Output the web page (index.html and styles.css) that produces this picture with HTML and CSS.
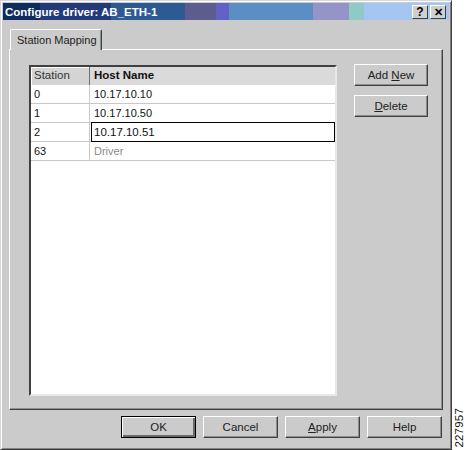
FILE: index.html
```html
<!DOCTYPE html>
<html lang="en">
<head>
    <meta charset="UTF-8">
    <title>Configure driver: AB_ETH-1</title>
    <link rel="stylesheet" href="styles.css">
</head>
<body>
    <div class="window">
        <div class="title-bar">
            <span class="title-text">Configure driver: AB_ETH-1</span>
            <div class="title-buttons">
                <span class="title-btn">?</span>
                <span class="title-btn close">✕</span>
            </div>
        </div>

        <div class="content">
            <div class="tabs">
                <div class="tab">Station Mapping</div>
            </div>
            <div class="panel">
                <div class="grid">
                    <div class="grid-row header">
                        <div class="cell station">Station</div>
                        <div class="cell host">Host Name</div>
                    </div>
                    <div class="grid-row">
                        <div class="cell station">0</div>
                        <div class="cell host">10.17.10.10</div>
                    </div>
                    <div class="grid-row">
                        <div class="cell station">1</div>
                        <div class="cell host">10.17.10.50</div>
                    </div>
                    <div class="grid-row">
                        <div class="cell station">2</div>
                        <div class="cell host editing">10.17.10.51</div>
                    </div>
                    <div class="grid-row">
                        <div class="cell station">63</div>
                        <div class="cell host muted">Driver</div>
                    </div>
                </div>
                <div class="side-buttons">
                    <button class="btn">Add <u>N</u>ew</button>
                    <button class="btn"><u>D</u>elete</button>
                </div>
            </div>
            <div class="footer">
                <button class="btn default">OK</button>
                <button class="btn">Cancel</button>
                <button class="btn"><u>A</u>pply</button>
                <button class="btn">Help</button>
            </div>
        </div>
    </div>
    <div class="strip">
        <span class="figure-id">227957</span>
    </div>
</body>
</html>
```

FILE: styles.css
```css
body {
    margin: 0;
    display: flex;
    width: 466px;
    height: 450px;
    overflow: hidden;
    background: #fff;
    font-family: "Liberation Sans", Arial, sans-serif;
    font-size: 11px;
    color: #111;
}

.window {
    width: 452px;
    height: 450px;
    box-sizing: border-box;
    padding: 2px;
    border: 1px solid;
    border-color: #d8d8d8 #404040 #404040 #d8d8d8;
    box-shadow: inset 1px 1px 0 #fff, inset -1px -1px 0 #808080;
    background: #cbcbcb;
    display: flex;
    flex-direction: column;
}

.title-bar {
    height: 17px;
    display: flex;
    align-items: center;
    justify-content: space-between;
    padding: 0 2px;
    background: linear-gradient(to right,
        #0f2c5e 0, #0f2c5e 37px,
        #23397a 37px, #23397a 108px,
        #2e5a93 108px, #2e5a93 182px,
        #5c5c8e 182px, #5c5c8e 213px,
        #6262c6 213px, #6262c6 226px,
        #5b8fc3 226px, #5b8fc3 310px,
        #9494c8 310px, #9494c8 346px,
        #90cac6 346px, #90cac6 361px,
        #a5c6f0 361px);
}

.title-text {
    color: #fff;
    font-weight: bold;
    font-size: 11.5px;
}

.title-buttons {
    display: flex;
    gap: 2px;
    margin-right: 1px;
}

.title-btn {
    width: 16px;
    height: 14px;
    box-sizing: border-box;
    background: #cfcfcf;
    border: 1px solid;
    border-color: #fff #404040 #404040 #fff;
    font-weight: bold;
    font-size: 12px;
    line-height: 12px;
    text-align: center;
    color: #000;
}

.title-btn.close {
    font-size: 11px;
}

.content {
    flex: 1;
    display: flex;
    flex-direction: column;
    padding: 9px 6px 0 6px;
}

.tabs {
    display: flex;
    padding-left: 1px;
    height: 20px;
    position: relative;
    z-index: 1;
}

.tab {
    width: 92px;
    height: 21px;
    box-sizing: border-box;
    padding: 4px 0 0 6px;
    white-space: nowrap;
    background: #cbcbcb;
    border: 1px solid;
    border-bottom: none;
    border-color: #fff #404040 #cbcbcb #fff;
    border-radius: 2px 2px 0 0;
    box-shadow: inset -1px 0 0 #909090;
    font-size: 11px;
    color: #222;
}

.panel {
    width: 434px;
    height: 361px;
    box-sizing: border-box;
    border: 1px solid;
    border-color: #fff #404040 #404040 #fff;
    box-shadow: inset -1px -1px 0 #909090;
    display: flex;
    gap: 17px;
    padding: 15px 0 0 19px;
}

.grid {
    width: 308px;
    height: 331px;
    box-sizing: border-box;
    background: #fff;
    border: 2px solid;
    border-color: #404040 #e8e8e8 #e8e8e8 #404040;
    display: flex;
    flex-direction: column;
}

.grid-row {
    display: flex;
    height: 19px;
    border-bottom: 1px solid #c8c8c8;
    box-sizing: border-box;
}

.grid-row.header {
    height: 18px;
    border-bottom: none;
    background: #d4d4d4;
}

.cell {
    box-sizing: border-box;
    padding: 3px 0 0 3px;
    white-space: nowrap;
}

.cell.station {
    width: 59px;
    border-right: 1px solid #c8c8c8;
}

.cell.host {
    flex: 1;
    padding-left: 4px;
}

.header .cell {
    padding-top: 2px;
    font-size: 11.5px;
}

.header .cell.station {
    color: #333;
    border-right: 1px solid #707070;
    box-shadow: inset 1px 1px 0 #fff;
}

.header .cell.host {
    font-weight: bold;
    background: #dadada;
}

.cell.editing {
    border: 1px solid #000;
    margin: -1px 0 -1px 1px;
    padding: 3px 0 0 2px;
    font-size: 11.5px;
}

.cell.muted {
    color: #8a8a8a;
}

.side-buttons {
    display: flex;
    flex-direction: column;
    gap: 9px;
    margin-top: -1px;
}

.btn {
    width: 74px;
    height: 22px;
    box-sizing: border-box;
    padding: 0;
    background: #cbcbcb;
    border: 1px solid;
    border-color: #fff #404040 #404040 #fff;
    box-shadow: inset -1px -1px 0 #8c8c8c;
    font-family: "Liberation Sans", Arial, sans-serif;
    font-size: 11.5px;
    color: #222;
}

.btn.default {
    border: 1px solid #000;
    box-shadow: inset 1px 1px 0 #fff, inset -2px -2px 0 #6a6a6a;
}

.footer {
    display: flex;
    justify-content: flex-end;
    gap: 7px;
    padding: 6px 1px 0 0;
}

.footer .btn {
    width: 75px;
}

.strip {
    flex: 1;
    display: flex;
    align-items: flex-end;
    justify-content: center;
    padding-bottom: 2px;
}

.figure-id {
    writing-mode: vertical-rl;
    transform: rotate(180deg);
    font-size: 11.5px;
    letter-spacing: 0.2px;
}
```
